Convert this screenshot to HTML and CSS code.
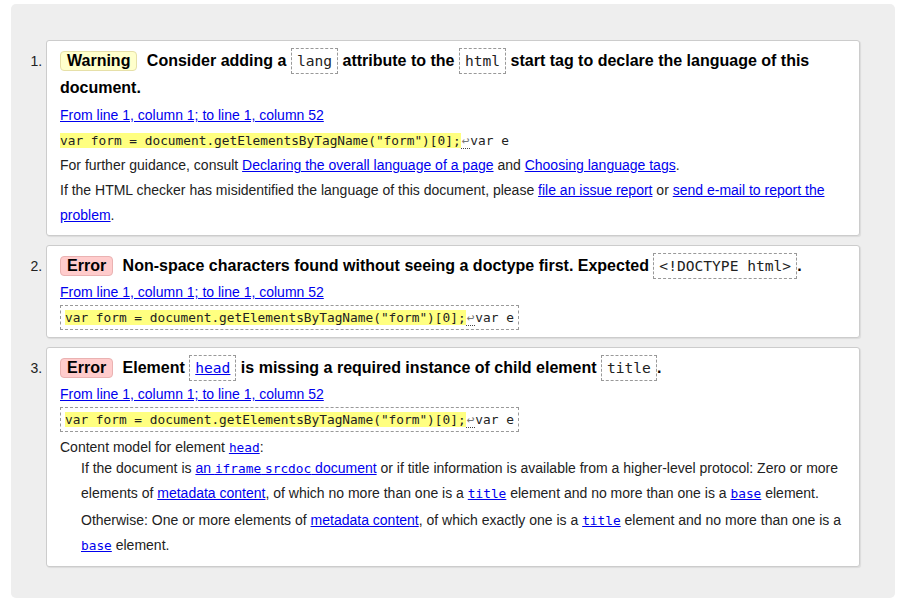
FILE: index.html
```html
<!DOCTYPE html>
<html lang="en">
<head>
<meta charset="utf-8">
<title>Validator messages</title>
<link rel="stylesheet" href="styles.css">
</head>
<body>
<div class="wrap">
  <ol class="messages">
    <li class="msg">
      <p class="head"><strong class="badge warning">Warning</strong> <span>Consider adding a <code class="kw">lang</code> attribute to the <code class="kw">html</code> start tag to declare the language of this document.</span></p>
      <p class="loc"><a href="#">From line 1, column 1; to line 1, column 52</a></p>
      <p class="line"><code class="extract"><b class="hl">var form = document.getElementsByTagName("form")[0];</b><span class="lf">↩</span>var e</code></p>
      <p class="line">For further guidance, consult <a href="#">Declaring the overall language of a page</a> and <a href="#">Choosing language tags</a>.</p>
      <p class="line">If the HTML checker has misidentified the language of this document, please <a href="#">file an issue report</a> or <a href="#">send e-mail to report the problem</a>.</p>
    </li>
    <li class="msg">
      <p class="head"><strong class="badge error">Error</strong> <span>Non-space characters found without seeing a doctype first. Expected <code class="kw">&lt;!DOCTYPE html&gt;</code>.</span></p>
      <p class="loc"><a href="#">From line 1, column 1; to line 1, column 52</a></p>
      <p class="line"><code class="extract boxed"><b class="hl">var form = document.getElementsByTagName("form")[0];</b><span class="lf">↩</span>var e</code></p>
    </li>
    <li class="msg">
      <p class="head"><strong class="badge error">Error</strong> <span>Element <code class="kw"><a href="#">head</a></code> is missing a required instance of child element <code class="kw">title</code>.</span></p>
      <p class="loc"><a href="#">From line 1, column 1; to line 1, column 52</a></p>
      <p class="line"><code class="extract boxed"><b class="hl">var form = document.getElementsByTagName("form")[0];</b><span class="lf">↩</span>var e</code></p>
      <p class="model">Content model for element <a href="#"><code>head</code></a>:</p>
      <dl class="model-list">
        <dd>If the document is <a href="#">an <code>iframe</code> <code>srcdoc</code> document</a> or if title information is available from a higher-level protocol: Zero or more elements of <a href="#">metadata content</a>, of which no more than one is a <a href="#"><code>title</code></a> element and no more than one is a <a href="#"><code>base</code></a> element.</dd>
        <dd>Otherwise: One or more elements of <a href="#">metadata content</a>, of which exactly one is a <a href="#"><code>title</code></a> element and no more than one is a <a href="#"><code>base</code></a> element.</dd>
      </dl>
    </li>
  </ol>
</div>
</body>
</html>
```

FILE: styles.css
```css
html, body {
  margin: 0;
  padding: 0;
  background: #fff;
}

body {
  padding: 4px 9px 7px 11px;
  font-family: "Liberation Sans", Arial, sans-serif;
  font-size: 14px;
  color: #000;
}

.wrap {
  background: #eee;
  border-radius: 5px;
  padding: 36px 35px 32px 35px;
  height: 594px;
  box-sizing: border-box;
}

.messages {
  margin: 0;
  padding: 0;
  list-style: decimal outside;
}

.msg {
  background: #fff;
  border: 1px solid #ccc;
  border-radius: 3px;
  box-shadow: 1px 1px 1px rgba(0, 0, 0, 0.08);
  padding: 6px 13px 7px 13px;
  margin: 0 0 9px 0;
  color: #222;
}

.msg::marker {
  color: #222;
  font-size: 14px;
}

.msg p {
  margin: 0;
}

.head {
  font-size: 16px;
  font-weight: bold;
  line-height: 27px;
  color: #000;
}

.badge {
  display: inline-block;
  line-height: 18px;
  padding: 0 6px;
  border-radius: 4px;
  margin-right: 5px;
  font-weight: bold;
  color: #000;
}

.warning {
  background: #ffffcc;
  border: 1px solid #e6e0a8;
}

.error {
  background: #ffcccc;
  border: 1px solid #eab2b2;
}

code {
  font-family: "DejaVu Sans Mono", "Liberation Mono", monospace;
  font-size: 12.8px;
}

.head code.kw {
  font-size: 14.6px;
  font-weight: normal;
  padding: 3px 5px 4px 5px;
  border: 1px dashed #999;
  color: #222;
}

a {
  color: #0000ee;
  text-decoration: underline;
}

.msg .loc {
  margin-top: 1px;
  line-height: 25px;
}

.msg:first-child .loc {
  margin-top: 2px;
}

.msg .line {
  line-height: 25px;
}

.extract {
  color: #222;
}

.extract.boxed {
  padding: 4px 4px 4px 4px;
  border: 1px dashed #999;
}

.hl {
  font-weight: normal;
  background: #ffff80;
}

.lf {
  color: #777;
  padding: 0 1px;
  border-bottom: 1px dotted #444;
}

.msg .model {
  margin-top: 7px;
  line-height: 16px;
}

.model-list {
  margin: 0 0 1px 0;
}

.model-list dd {
  margin: 0 0 2px 21px;
  line-height: 25px;
}

.model-list dd:last-child {
  margin-bottom: 0;
}
```
